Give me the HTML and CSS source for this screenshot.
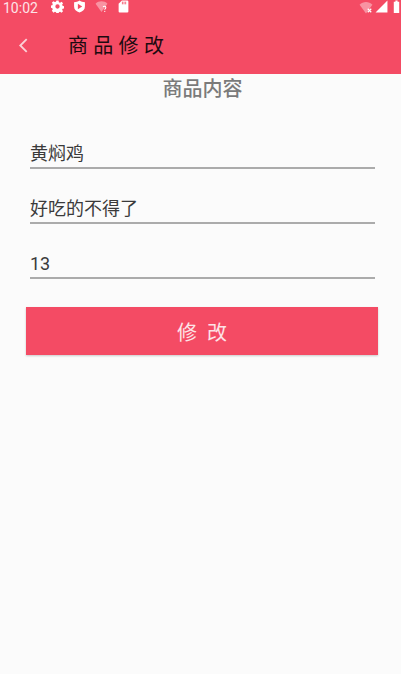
FILE: index.html
```html
<!DOCTYPE html>
<html lang="zh">
<head>
<meta charset="utf-8">
<title>商品修改</title>
<link rel="stylesheet" href="styles.css">
</head>
<body>
<header class="appbar">
  <div class="status">
    <span class="time">10:02</span>
    <svg class="si gear" viewBox="0 0 24 24"><path fill="#fff" fill-rule="evenodd" d="M10 1h4l.6 3 2.2.9 2.6-1.7 2.8 2.8-1.7 2.6.9 2.2 3 .6v4l-3 .6-.9 2.2 1.7 2.6-2.8 2.8-2.6-1.7-2.2.9-.6 3h-4l-.6-3-2.2-.9-2.6 1.7L1.6 19.800l1.7-2.600-.9-2.200-3-.6v-4l3-.6.9-2.200-1.700-2.600L4.400 2.200l2.600 1.700 2.200-.9zM12 8a4 4 0 1 0 0 8 4 4 0 0 0 0-8z"/></svg>
    <svg class="si shield" viewBox="0 0 24 24"><path fill="#fff" d="M12 1c3 2 6 3 10 3v8c0 6-4 9-10 11C6 21 2 18 2 12V4c4 0 7-1 10-3z"/><path fill="#f44b64" d="M9 7l8 5-8 5z"/></svg>
    <svg class="si wifi-q" viewBox="0 0 24 24"><path fill="#fff" opacity=".4" d="M1 7c6-6 16-6 22 0L12 22z"/><path fill="none" stroke="#fff" stroke-width="2" d="M15 13c1-2 5-2 5 1 0 2-2 2-2 4"/><rect x="17" y="20" width="2" height="2" fill="#fff"/></svg>
    <svg class="si sd" viewBox="0 0 24 24"><path fill="#fff" d="M9 1h10a2 2 0 0 1 2 2v18a2 2 0 0 1-2 2H5a2 2 0 0 1-2-2V7z"/><path stroke="#f44b64" stroke-width="1.500" d="M10 3v5M13 3v5M16 3v5"/></svg>
    <span class="spacer"></span>
    <svg class="si wifi-x" viewBox="0 0 24 24"><path fill="#fff" opacity=".4" d="M1 8c6-6 16-6 22 0L12 23z"/><path stroke="#fff" stroke-width="2" d="M15 15l6 6M21 15l-6 6"/></svg>
    <svg class="si signal" viewBox="0 0 24 24"><path fill="#fff" d="M23 1v22H1z"/></svg>
    <svg class="si battery" viewBox="0 0 12 24"><path fill="#fff" d="M1 3h3V1h4v2h3v21H1z"/></svg>
  </div>
  <div class="toolbar">
    <svg class="back" viewBox="0 0 12 18"><path fill="none" stroke="#fbd0d6" stroke-width="2" d="M9.500 2L2.500 9l7 7"/></svg>
    <h1 class="title">商品修改</h1>
  </div>
</header>
<main class="content">
  <h2 class="heading">商品内容</h2>
  <form class="form">
    <div class="field">黄焖鸡</div>
    <div class="field">好吃的不得了</div>
    <div class="field">13</div>
    <button type="button" class="submit">修改</button>
  </form>
</main>
</body>
</html>
```

FILE: styles.css
```css
* { box-sizing: border-box; }
html, body { margin: 0; height: 100%; }
body {
  background: #fbfbfb;
  font-family: Roboto, "Noto Sans CJK SC", sans-serif;
  overflow: hidden;
}
.appbar {
  height: 74px;
  background: #f44b64;
  display: flex;
  flex-direction: column;
}
.status {
  height: 16px;
  display: flex;
  align-items: flex-start;
  padding-left: 3px;
  color: #fde3e7;
}
.time { font-size: 14px; line-height: 17px; height: 14px; width: 48px; overflow: visible; }
.si { width: 13px; height: 13px; margin-right: 9px; flex: none; }
.shield { margin-right: 9px; }
.wifi-q { margin-right: 9px; }
.spacer { flex: 1; }
.wifi-x { margin-right: 2px; width: 14px; height: 14px; }
.signal { margin-right: 5px; }
.battery { width: 7px; margin-right: 1px; }
.toolbar {
  flex: 1;
  display: flex;
  align-items: center;
  padding-left: 18px;
}
.back { width: 11px; height: 17px; flex: none; }
.title {
  margin: 0 0 0 39px;
  font: 400 20px/24px "Noto Sans CJK SC", sans-serif;
  letter-spacing: 5.300px;
  color: #1c0a10;
}
.heading {
  margin: 0;
  height: 28px;
  padding-left: 4px;
  text-align: center;
  font: 500 20px/28px "Noto Sans CJK SC", sans-serif;
  color: #7a7a7a;
}
.form {
  display: flex;
  flex-direction: column;
  padding: 0 23px 0 26px;
}
.field {
  height: 40px;
  margin: 27px 3px 0 4px;
  padding-top: 12px;
  border-bottom: 2px solid #ababab;
  font: 400 18px/26px Roboto, "Noto Sans CJK SC", sans-serif;
  color: #3a3a3a;
}
.field + .field { margin-top: 15px; }
.submit {
  height: 48px;
  margin-top: 28px;
  border: 0;
  border-radius: 0;
  background: #f44b64;
  box-shadow: 0 1px 2px rgba(0,0,0,.2);
  color: #fde3e7;
  font: 400 20px/48px "Noto Sans CJK SC", sans-serif;
  letter-spacing: 10px;
  padding-left: 16px;
}
```
